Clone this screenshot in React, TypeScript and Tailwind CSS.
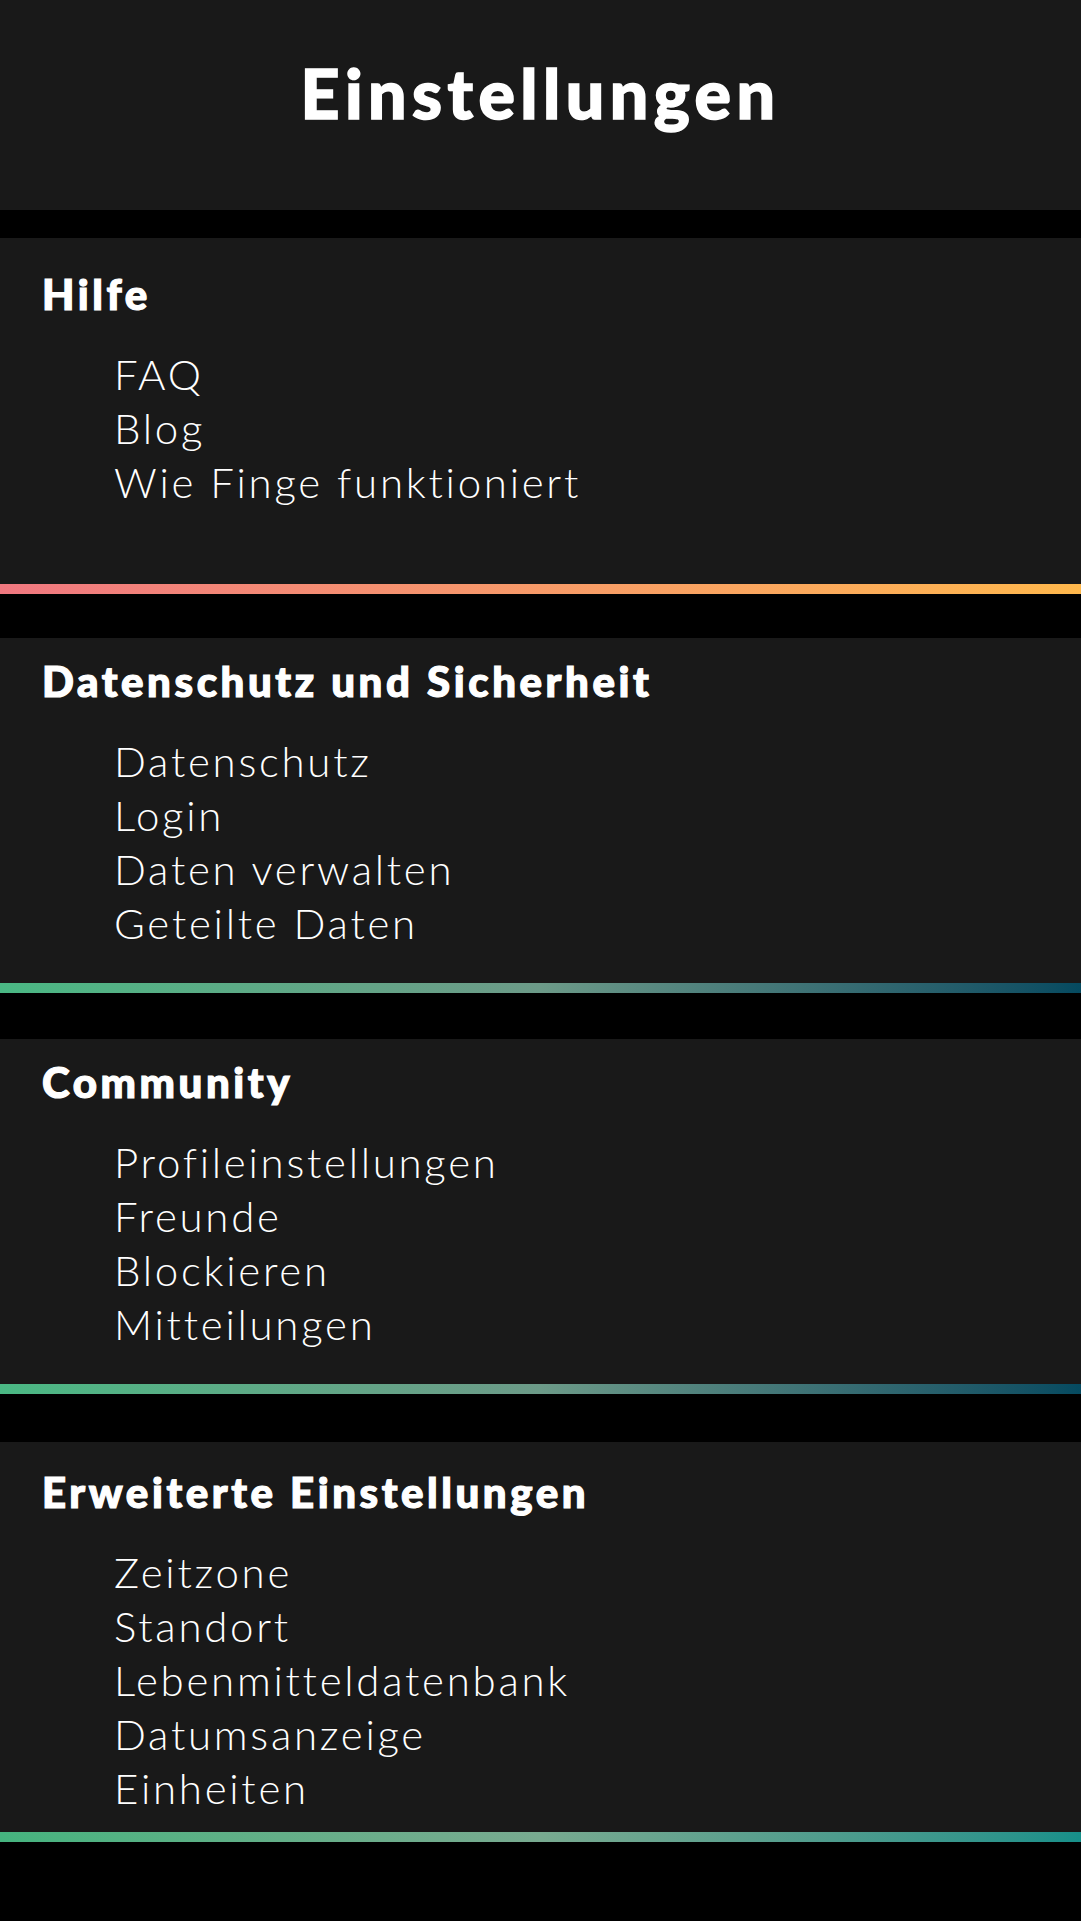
const sections = [
  {
    title: "Hilfe",
    items: ["FAQ", "Blog", "Wie Finge funktioniert"],
    box: "mt-[28px] pt-[35px]",
    list: "pb-[75px]",
    line: "bg-gradient-to-r from-[#f07880] via-[#f79a68] to-[#ffb84c]",
  },
  {
    title: "Datenschutz und Sicherheit",
    items: ["Datenschutz", "Login", "Daten verwalten", "Geteilte Daten"],
    box: "mt-[44px] pt-[22px]",
    list: "pb-[33px]",
    line: "bg-gradient-to-r from-[#4ab884] via-[#6c9a88] to-[#054a60]",
  },
  {
    title: "Community",
    items: ["Profileinstellungen", "Freunde", "Blockieren", "Mitteilungen"],
    box: "mt-[46px] pt-[22px]",
    list: "pb-[33px]",
    line: "bg-gradient-to-r from-[#4ab884] via-[#6c9a88] to-[#054a60]",
  },
  {
    title: "Erweiterte Einstellungen",
    items: ["Zeitzone", "Standort", "Lebenmitteldatenbank", "Datumsanzeige", "Einheiten"],
    box: "mt-[48px] pt-[29px]",
    list: "pb-[17px]",
    line: "bg-gradient-to-r from-[#45b47f] via-[#78aa90] to-[#16908a]",
  },
];

export default function App() {
  return (
    <div className="flex min-h-screen w-full flex-col bg-black font-['Lato','Open_Sans',sans-serif] text-white">
      <header className="h-[210px] bg-[#191919] pt-[59px] text-center">
        <h1 className="text-[68px] font-black leading-none tracking-[0.08em] [-webkit-text-stroke:1.5px_white]">
          Einstellungen
        </h1>
      </header>

      {sections.map((s) => (
        <section key={s.title} className={`bg-[#191919] ${s.box}`}>
          <h2 className="pl-[42px] text-[42px] font-black leading-none tracking-[0.085em] [-webkit-text-stroke:1.2px_white]">
            {s.title}
          </h2>
          <ul className={`mt-8 pl-[114px] ${s.list}`}>
            {s.items.map((item) => (
              <li key={item} className="text-[42px] font-light leading-[54px] tracking-[0.065em]">
                {item}
              </li>
            ))}
          </ul>
          <div className={`h-[10px] w-full ${s.line}`} />
        </section>
      ))}
    </div>
  );
}
